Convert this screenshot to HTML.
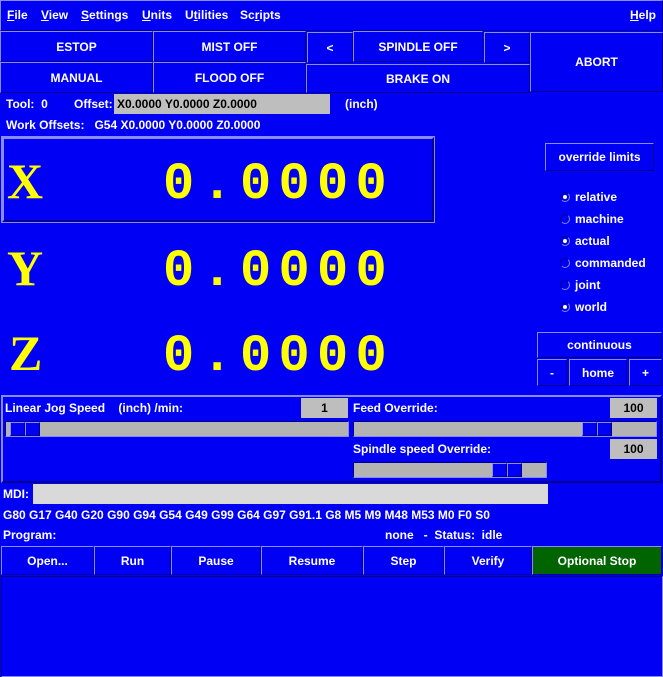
<!DOCTYPE html>
<html><head><meta charset="utf-8"><style>
*{box-sizing:border-box;margin:0;padding:0}
body{width:663px;height:677px;background:#0000f5;font-family:"Liberation Sans",sans-serif;font-weight:bold;font-size:12px;color:#fff;position:relative;overflow:hidden}
.a{position:absolute}
.b{position:absolute;border:1px solid;border-color:#8a8aff #00008a #00008a #8a8aff;display:flex;align-items:center;justify-content:center;background:#0000f5}
.t{position:absolute;white-space:pre;line-height:14px}
.e{position:absolute;background:#bebebe;color:#000;border:1px solid #bebebe}
.sl{position:absolute;background:#b3b3b3;border:1px solid;border-color:#00008a #8a8aff #8a8aff #00008a}
.th{position:absolute;top:0;height:14px;width:15px;background:#0000f5;border:1px solid;border-color:#8a8aff #00008a #00008a #8a8aff}
.r{position:absolute;width:10px;height:10px;border-radius:50%;border:1px solid;border-color:#00008a #8a8aff #8a8aff #00008a}
.r.on:after{content:"";position:absolute;left:2px;top:2px;width:4px;height:4px;border-radius:50%;background:#fff}
.dro{position:absolute;font-family:"Liberation Mono",monospace;font-weight:bold;color:#ff0;font-size:52px;line-height:52px;letter-spacing:7.3px;white-space:pre}
.ax{position:absolute;font-family:"Liberation Serif",serif;font-weight:bold;color:#ff0;font-size:50px;line-height:52px}
u{text-decoration:underline}
</style></head><body>
<div class="a" style="left:0;top:0;width:663px;height:31px;border:1px solid;border-color:#8a8aff #00008a #00008a #8a8aff"></div>
<div class="t" style="left:7px;top:8px"><u>F</u>ile</div>
<div class="t" style="left:41px;top:8px"><u>V</u>iew</div>
<div class="t" style="left:81px;top:8px"><u>S</u>ettings</div>
<div class="t" style="left:142px;top:8px"><u>U</u>nits</div>
<div class="t" style="left:185px;top:8px">U<u>t</u>ilities</div>
<div class="t" style="left:240px;top:8px">Sc<u>r</u>ipts</div>
<div class="t" style="left:630px;top:8px"><u>H</u>elp</div>

<div class="b" style="left:0;top:31px;width:153px;height:31px">ESTOP</div>
<div class="b" style="left:153px;top:31px;width:153px;height:31px">MIST OFF</div>
<div class="b" style="left:307px;top:32px;width:46px;height:31px">&lt;</div>
<div class="b" style="left:353px;top:31px;width:130px;height:31px">SPINDLE OFF</div>
<div class="b" style="left:484px;top:32px;width:46px;height:31px">&gt;</div>
<div class="b" style="left:530px;top:32px;width:133px;height:60px">ABORT</div>
<div class="b" style="left:0;top:62px;width:153px;height:31px">MANUAL</div>
<div class="b" style="left:153px;top:62px;width:153px;height:31px">FLOOD OFF</div>
<div class="b" style="left:306px;top:64px;width:224px;height:29px">BRAKE ON</div>

<div class="t" style="left:6px;top:97px">Tool:  0</div>
<div class="t" style="left:74px;top:97px">Offset:</div>
<div class="e" style="left:114px;top:94px;width:216px;height:20px;padding:2px 2px;line-height:14px">X0.0000 Y0.0000 Z0.0000</div>
<div class="t" style="left:345px;top:97px">(inch)</div>
<div class="t" style="left:6px;top:118px">Work Offsets:   G54 X0.0000 Y0.0000 Z0.0000</div>

<div class="a" style="left:2px;top:137px;width:432px;height:85px;border:2px solid;border-color:#8a8aff #00008a #00008a #8a8aff;outline:1px solid #8a8aff"></div>
<div class="ax" style="left:7px;top:155px">X</div><div class="dro" style="left:163px;top:159px">0.0000</div>
<div class="ax" style="left:7px;top:242px">Y</div><div class="dro" style="left:163px;top:246px">0.0000</div>
<div class="ax" style="left:9px;top:327px">Z</div><div class="dro" style="left:163px;top:331px">0.0000</div>

<div class="b" style="left:545px;top:143px;width:109px;height:28px">override limits</div>
<div class="r on" style="left:560px;top:192px"></div><div class="t" style="left:575px;top:190px">relative</div>
<div class="r" style="left:560px;top:214px"></div><div class="t" style="left:575px;top:212px">machine</div>
<div class="r on" style="left:560px;top:236px"></div><div class="t" style="left:575px;top:234px">actual</div>
<div class="r" style="left:560px;top:258px"></div><div class="t" style="left:575px;top:256px">commanded</div>
<div class="r" style="left:560px;top:280px"></div><div class="t" style="left:575px;top:278px">joint</div>
<div class="r on" style="left:560px;top:302px"></div><div class="t" style="left:575px;top:300px">world</div>
<div class="b" style="left:537px;top:332px;width:125px;height:26px">continuous</div>
<div class="b" style="left:537px;top:359px;width:30px;height:27px">-</div>
<div class="b" style="left:569px;top:359px;width:58px;height:27px">home</div>
<div class="b" style="left:629px;top:359px;width:33px;height:27px">+</div>

<div class="a" style="left:1px;top:395px;width:661px;height:88px;border:2px solid;border-color:#8a8aff #00008a #00008a #8a8aff"></div>
<div class="t" style="left:5px;top:401px">Linear Jog Speed    (inch) /min:</div>
<div class="e" style="left:301px;top:398px;width:47px;height:20px;text-align:center;line-height:18px">1</div>
<div class="sl" style="left:5px;top:421px;width:344px;height:16px"><div class="th" style="left:4px"></div><div class="th" style="left:19px"></div></div>
<div class="t" style="left:353px;top:401px">Feed Override:</div>
<div class="e" style="left:610px;top:398px;width:47px;height:20px;text-align:center;line-height:18px">100</div>
<div class="sl" style="left:353px;top:421px;width:304px;height:16px"><div class="th" style="left:228px"></div><div class="th" style="left:243px"></div></div>
<div class="t" style="left:353px;top:442px">Spindle speed Override:</div>
<div class="e" style="left:610px;top:439px;width:47px;height:20px;text-align:center;line-height:18px">100</div>
<div class="sl" style="left:353px;top:462px;width:194px;height:16px"><div class="th" style="left:138px"></div><div class="th" style="left:153px"></div></div>

<div class="t" style="left:3px;top:487px">MDI:</div>
<div class="a" style="left:33px;top:484px;width:515px;height:20px;background:#d9d9d9"></div>
<div class="t" style="left:3px;top:508px">G80 G17 G40 G20 G90 G94 G54 G49 G99 G64 G97 G91.1 G8 M5 M9 M48 M53 M0 F0 S0</div>
<div class="t" style="left:3px;top:528px">Program:</div>
<div class="t" style="left:385px;top:528px">none   -  Status:  idle</div>

<div class="b" style="left:1px;top:546px;width:93px;height:29px">Open...</div>
<div class="b" style="left:94px;top:546px;width:77px;height:29px">Run</div>
<div class="b" style="left:171px;top:546px;width:90px;height:29px">Pause</div>
<div class="b" style="left:261px;top:546px;width:102px;height:29px">Resume</div>
<div class="b" style="left:363px;top:546px;width:81px;height:29px">Step</div>
<div class="b" style="left:444px;top:546px;width:88px;height:29px">Verify</div>
<div class="b" style="left:532px;top:546px;width:130px;height:29px;background:#006400">Optional Stop</div>
<div class="a" style="left:1px;top:576px;width:662px;height:101px;border:1px solid;border-color:#00008a #8a8aff #8a8aff #00008a"></div>
</body></html>
